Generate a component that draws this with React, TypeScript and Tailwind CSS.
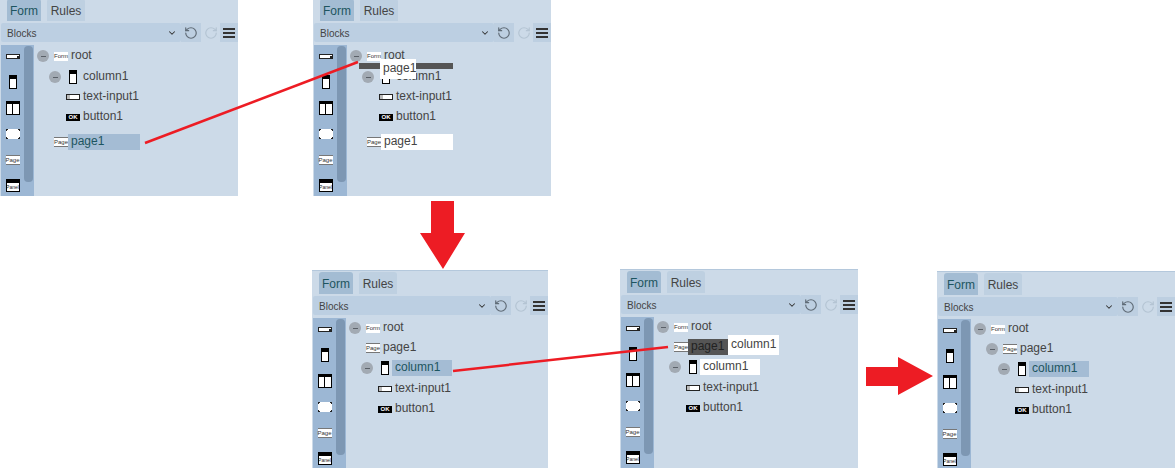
import React from "react";
import { RotateCcw, RotateCw, ChevronDown } from "lucide-react";

type IconKind = "form" | "page" | "column" | "input" | "button";
type Row = {
  label: string;
  depth: string;
  icon: IconKind;
  toggle?: boolean;
  box?: string;
  extra?: string;
};

function TinyText({ children, className = "" }: { children: React.ReactNode; className?: string }) {
  return <span className={`font-['Liberation_Sans',sans-serif] leading-none ${className}`}>{children}</span>;
}

function TreeIcon({ kind }: { kind: IconKind }) {
  if (kind === "form")
    return (
      <div className="w-[14px] h-[9px] bg-white flex items-center justify-center">
        <TinyText className="text-[6px] text-[#333]">Form</TinyText>
      </div>
    );
  if (kind === "page")
    return (
      <div className="w-[14px] h-[10px] bg-white border-y border-y-[#777] flex items-center justify-center">
        <TinyText className="text-[6px] text-[#333]">Page</TinyText>
      </div>
    );
  if (kind === "column")
    return (
      <div className="w-[14px] flex justify-center">
        <div className="w-[8px] h-[14px] bg-white border border-black border-t-[4px]" />
      </div>
    );
  if (kind === "input")
    return (
      <div className="w-[14px] h-[6px] bg-white border border-[#222] flex items-center">
        <div className="w-[3px] h-full bg-[#bbb]" />
      </div>
    );
  return (
    <div className="w-[14px] h-[7px] bg-black flex items-center justify-center">
      <TinyText className="text-[6px] font-bold text-white">OK</TinyText>
    </div>
  );
}

function Palette() {
  return (
    <div className="w-[33px] h-full ml-[1px] mt-[1px] bg-[#9cb7d4] flex shrink-0">
      <div className="w-[23px] flex flex-col items-center pt-[4px] gap-[12px] shrink-0">
        <div className="h-[14px] flex items-center">
          <div className="w-[14px] h-[5px] bg-white border border-[#222] flex justify-end items-end">
            <div className="w-[2px] h-[2px] bg-[#222]" />
          </div>
        </div>
        <div className="h-[14px] flex items-center">
          <div className="w-[8px] h-[14px] bg-white border border-black border-t-[4px]" />
        </div>
        <div className="w-[14px] h-[14px] bg-white border border-black border-t-[3px] flex justify-center">
          <div className="w-[1px] h-full bg-black" />
        </div>
        <div className="h-[14px] flex items-center">
          <svg width="14" height="10" viewBox="0 0 14 10" shapeRendering="crispEdges">
            <rect x="0" y="0" width="14" height="10" fill="#fff" />
            <path d="M0 0H2V1H1V2H0ZM12 0H14V2H13V1H12ZM0 8H1V9H2V10H0ZM13 8H14V10H12V9H13Z" fill="#222" />
          </svg>
        </div>
        <div className="h-[14px] flex items-center">
          <div className="w-[14px] h-[10px] bg-white border-y border-y-[#777] flex items-center justify-center">
            <TinyText className="text-[6px] text-[#333]">Page</TinyText>
          </div>
        </div>
        <div className="w-[14px] h-[13px] bg-white border border-black border-t-[4px] flex items-center justify-center overflow-hidden">
          <TinyText className="text-[5px] text-[#222]">Panel</TinyText>
        </div>
      </div>
      <div className="w-[9px] h-[136px] mt-px rounded-[4px] bg-[#7d97b3]" />
    </div>
  );
}

function TreeRow({ row }: { row: Row }) {
  return (
    <div className={`h-[20px] flex items-center text-[12px] text-[#444] ${row.depth} ${row.extra ?? ""}`}>
      <div className="w-[17px] shrink-0">
        {row.toggle && (
          <div className="w-[12px] h-[12px] rounded-full bg-[#a2aab3] flex items-center justify-center">
            <div className="w-[5px] h-[1px] bg-[#5a6068]" />
          </div>
        )}
      </div>
      <div className="shrink-0">
        <TreeIcon kind={row.icon} />
      </div>
      <div className={`h-[16px] pl-[3px] leading-[15px] ${row.box ?? ""}`}>{row.label}</div>
    </div>
  );
}

function Panel({ className, rows, children }: { className: string; rows: Row[]; children?: React.ReactNode }) {
  return (
    <div className={`absolute bg-[#ccdae8] flex flex-col font-['Liberation_Sans',sans-serif] overflow-hidden border-t border-t-[#b4c8dc] ${className}`}>
      <div className="h-[25px] pl-[7px] pt-[1px] flex gap-[6px] text-[12px] shrink-0">
        <div className="w-[34px] h-[22px] pt-px rounded-t-[3px] bg-[#a3bcd3] text-[#1d5560] flex items-center justify-center">Form</div>
        <div className="w-[38px] h-[22px] pt-px rounded-t-[3px] bg-[#bed0e1] text-[#444] flex items-center justify-center">Rules</div>
      </div>
      <div className="h-[19px] flex items-stretch shrink-0">
        <div className="flex-1 ml-[1px] bg-[#bccfe2] rounded-[2px] flex items-center justify-between pl-[6px] pr-[4px] text-[10px] text-[#444]">
          <span className="pt-px">Blocks</span>
          <ChevronDown size={10} strokeWidth={2.5} color="#333" />
        </div>
        <div className="w-[20px] bg-[#bdcfe1] flex items-center justify-center">
          <RotateCcw size={14} strokeWidth={2} color="#5f6b76" />
        </div>
        <div className="w-[19px] flex items-center justify-center">
          <RotateCw size={14} strokeWidth={2} color="#b4c4d3" />
        </div>
        <div className="w-[18px] bg-[#bdcfe1] flex flex-col items-center justify-center gap-[2px]">
          <div className="w-[12px] h-[2px] bg-[#333]" />
          <div className="w-[12px] h-[2px] bg-[#333]" />
          <div className="w-[12px] h-[2px] bg-[#333]" />
        </div>
      </div>
      <div className="flex-1 flex min-h-0 pt-[2px]">
        <Palette />
        <div className="pl-[3px] pt-px flex flex-col">
          {rows.map((r) => (
            <TreeRow key={r.label} row={r} />
          ))}
        </div>
      </div>
      {children}
    </div>
  );
}

const hi = "bg-[#a4bcd4] text-[#1d5560]";
const white = "bg-white";

const rowsA: Row[] = [
  { label: "root", depth: "pl-0", icon: "form", toggle: true, extra: "mt-px" },
  { label: "column1", depth: "pl-[12px]", icon: "column", toggle: true, extra: "mt-px" },
  { label: "text-input1", depth: "pl-[12px]", icon: "input" },
  { label: "button1", depth: "pl-[12px]", icon: "button" },
  { label: "page1", depth: "pl-0", icon: "page", extra: "mt-[5px]", box: `w-[72px] ${hi}` },
];
const rowsB: Row[] = rowsA.map((r) => (r.label === "page1" ? { ...r, box: `w-[72px] ${white}` } : r));
const rowsC: Row[] = [
  { label: "root", depth: "pl-0", icon: "form", toggle: true },
  { label: "page1", depth: "pl-0", icon: "page" },
  { label: "column1", depth: "pl-[12px]", icon: "column", toggle: true, box: `w-[60px] ${hi}` },
  { label: "text-input1", depth: "pl-[12px]", icon: "input", extra: "mt-px" },
  { label: "button1", depth: "pl-[12px]", icon: "button" },
];
const rowsD: Row[] = rowsC.map((r) => {
  if (r.label === "column1") return { ...r, box: `w-[60px] ${white}` };
  return r;
});
const rowsE: Row[] = [
  { label: "root", depth: "pl-0", icon: "form", toggle: true },
  { label: "page1", depth: "pl-[12px]", icon: "page", toggle: true },
  { label: "column1", depth: "pl-[24px]", icon: "column", toggle: true, box: `w-[60px] ${hi}` },
  { label: "text-input1", depth: "pl-[24px]", icon: "input", extra: "mt-px" },
  { label: "button1", depth: "pl-[24px]", icon: "button" },
];

export default function App() {
  return (
    <div className="relative w-[1175px] h-[468px] overflow-hidden bg-white">
      <Panel className="left-0 top-[-3px] w-[238px] h-[199px]" rows={rowsA} />
      <Panel className="left-[313px] top-[-3px] w-[238px] h-[199px]" rows={rowsB}>
        <div className="absolute left-[46px] top-[65px] w-[94px] h-[6px] bg-[#555]" />
        <div className="absolute left-[67px] top-[61px] w-[36px] h-[20px] bg-white text-[12px] text-[#444] leading-[19px] pl-[3px]">page1</div>
      </Panel>
      <Panel className="left-[312px] top-[270px] w-[236px] h-[199px]" rows={rowsC} />
      <Panel className="left-[620px] top-[269px] w-[238px] h-[199px]" rows={rowsD}>
        <div className="absolute left-[68px] top-[69px] w-[72px] h-[16px] bg-[#555] text-[12px] text-[#222] leading-[15px] pl-[3px]">page1</div>
        <div className="absolute left-[108px] top-[65px] w-[51px] h-[20px] bg-white text-[12px] text-[#444] leading-[19px] pl-[3px]">column1</div>
      </Panel>
      <Panel className="left-[937px] top-[271px] w-[238px] h-[199px]" rows={rowsE} />

      <svg className="absolute left-0 top-0 pointer-events-none" width="1175" height="468" viewBox="0 0 1175 468">
        <line x1="145" y1="143" x2="358" y2="62" stroke="#ed1c24" strokeWidth="2.5" />
        <line x1="453" y1="371" x2="668" y2="347" stroke="#ed1c24" strokeWidth="2.5" />
        <polygon points="431,201 454,201 454,233 465,233 443,269 420,233 431,233" fill="#ed1c24" />
        <polygon points="866,367 898,367 898,357 933,376 898,395 898,386 866,386" fill="#ed1c24" />
      </svg>
    </div>
  );
}
